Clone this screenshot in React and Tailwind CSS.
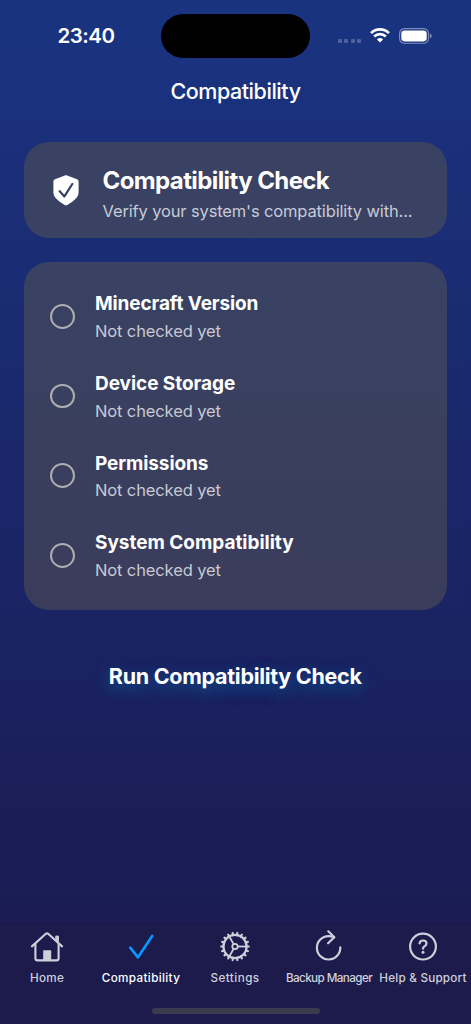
import React from 'react';
import { clsx } from 'clsx';

const checks = [
  { id: 'minecraft', title: 'Minecraft Version', status: 'Not checked yet', tracking: 'tracking-[-0.12px]' },
  { id: 'storage', title: 'Device Storage', status: 'Not checked yet', tracking: 'tracking-[-0.05px]' },
  { id: 'permissions', title: 'Permissions', status: 'Not checked yet', tracking: 'tracking-[-0.1px]' },
  { id: 'system', title: 'System Compatibility', status: 'Not checked yet', tracking: 'tracking-[-0.02px]' },
];

function SignalDots() {
  return (
    <div className="flex gap-[2.4px]">
      {[0, 1, 2, 3].map(i => (
        <span key={i} className="size-[4px] rounded-[1.3px] bg-[#52639c]" />
      ))}
    </div>
  );
}

function WifiIcon() {
  return (
    <svg width="20" height="15" viewBox="0 0 20 15" fill="none" stroke="white" strokeWidth="2.7">
      <path d="M1.1 5.1a12.7 12.7 0 0 1 17.8 0" />
      <path d="M4.2 8.5a8.3 8.3 0 0 1 11.6 0" />
      <path d="M10 14.6 6.9 11.5a4.5 4.5 0 0 1 6.2 0Z" fill="white" stroke="none" />
    </svg>
  );
}

function BatteryIcon() {
  return (
    <svg width="33" height="16" viewBox="0 0 33 16">
      <rect x="0.6" y="0.6" width="28.8" height="14.6" rx="4.8" fill="none" stroke="#8390ba" strokeWidth="1.1" />
      <rect x="2.3" y="2.4" width="25.4" height="11" rx="3.3" fill="white" />
      <path d="M30.9 5.4c1.2.5 1.8 1.4 1.8 2.5s-.6 2-1.8 2.5Z" fill="#8390ba" />
    </svg>
  );
}

function ShieldIcon() {
  return (
    <svg width="26" height="31" viewBox="0 0 26 31" fill="none">
      <path d="M13 .3c1 0 1.6.4 2.4.8l8 2.9c1.5.5 2.2 1.2 2.2 2.9v10.7c0 3.4-2.3 6.2-6 8.8-1.7 1.3-3.5 2.4-5 3.4-1.2.7-2 .7-3.2 0-1.5-1-3.3-2.1-5-3.4-3.7-2.6-6-5.4-6-8.8V6.9c0-1.7.7-2.4 2.2-2.9l8-2.9c.8-.4 1.4-.8 2.4-.8Z" fill="white" />
      <path d="m6.7 16.2 4.7 5.2L19.3 9" stroke="#39405f" strokeWidth="2.2" strokeLinecap="round" strokeLinejoin="round" />
    </svg>
  );
}

function HomeIcon() {
  return (
    <svg width="34" height="34" viewBox="0 0 34 34" fill="none" stroke="#cfcfdb" strokeWidth="2.1" strokeLinecap="round" strokeLinejoin="round">
      <path d="M1.9 16.4 15.6 4c.9-.8 1.9-.8 2.8 0l13.7 12.4" />
      <path d="M5.4 14v14.2c0 1.4.8 2.2 2.2 2.2h18.8c1.4 0 2.2-.8 2.2-2.2V14" />
      <path d="M26.1 6.1h2.3v6.7l-2.3-2.1Z" fill="#cfcfdb" strokeWidth="1" />
      <path d="M13.9 30V21h6.6V30Z" fill="#cfcfdb" strokeWidth="1.4" />
    </svg>
  );
}

function CheckIcon() {
  return (
    <svg width="34" height="34" viewBox="0 0 34 34" fill="none" stroke="#0a97ff" strokeWidth="2.7" strokeLinecap="round" strokeLinejoin="round">
      <path d="m6.2 17.7 7.8 9.6L28.2 6" />
    </svg>
  );
}

function GearIcon() {
  return (
    <svg width="34" height="34" viewBox="0 0 34 34" fill="none" stroke="#cfcfdb" strokeWidth="2">
      {Array.from({ length: 18 }, (_, i) => (
        <path key={i} d="M28.5 16.5h2.3" strokeWidth="2.1" strokeLinecap="round" transform={`rotate(${i * 20} 17 16.5)`} />
      ))}
      <circle cx="17" cy="16.5" r="11.6" strokeWidth="2.2" />
      <circle cx="17" cy="16.5" r="2.7" strokeWidth="1.8" />
      {[0, 120, 240].map(deg => (
        <path key={deg} d="M20 16.5h8.5" strokeWidth="1.8" transform={`rotate(${deg} 17 16.5)`} />
      ))}
    </svg>
  );
}

function RefreshIcon() {
  return (
    <svg width="34" height="34" viewBox="0 0 34 34" fill="none" stroke="#cfcfdb" strokeWidth="2.2" strokeLinecap="round" strokeLinejoin="round">
      <path d="M28.3 17.3A11.7 11.7 0 1 1 16.6 6.1q3 0 5.4.9" />
      <path d="m16.3 1.3 6 6-6.2 6" />
    </svg>
  );
}

function HelpIcon() {
  return (
    <svg width="34" height="34" viewBox="0 0 34 34" fill="none" stroke="#cfcfdb" strokeWidth="2.2" strokeLinecap="round">
      <circle cx="17" cy="16.6" r="12.9" />
      <path d="M13.6 13.4c.2-2 1.5-2.9 3.4-2.9 2.1 0 3.5 1.1 3.5 2.9 0 1.4-.8 2.1-1.8 2.8-1.2.8-1.7 1.2-1.7 2.5" />
      <circle cx="17" cy="22.3" r="1.5" fill="#cfcfdb" stroke="none" />
    </svg>
  );
}

const tabs = [
  { label: 'Home', icon: HomeIcon, tracking: 'tracking-[0.3px]' },
  { label: 'Compatibility', icon: CheckIcon, tracking: 'tracking-[0.35px]', active: true },
  { label: 'Settings', icon: GearIcon, tracking: 'tracking-[0.45px]' },
  { label: 'Backup Manager', icon: RefreshIcon, tracking: 'tracking-[-0.6px]' },
  { label: 'Help & Support', icon: HelpIcon, tracking: 'tracking-[0.22px]' },
];

function StatusBar() {
  return (
    <div className="relative h-[58px]">
      <span className="absolute left-[57.5px] top-[24px] text-[20.5px] leading-6 font-semibold tracking-[-0.5px]">23:40</span>
      <div className="absolute left-[161px] top-[14px] h-[44px] w-[149px] rounded-full bg-black" />
      <div className="absolute left-[338px] top-[38.5px]"><SignalDots /></div>
      <div className="absolute left-[370px] top-[28px]"><WifiIcon /></div>
      <div className="absolute left-[399px] top-[27.5px]"><BatteryIcon /></div>
    </div>
  );
}

export default function App() {
  return (
    <div className="flex h-[1024px] w-[471px] flex-col overflow-hidden bg-linear-to-b from-[#1a3380] via-[#1a2668] to-[#1a194e] font-[Inter,sans-serif] text-white">
      <header className="h-[119px] shrink-0 bg-[#1a3380]/60">
        <StatusBar />
        <h1 className="mt-[20px] text-center text-[21.5px] leading-[26px] font-medium tracking-[-0.45px]">Compatibility</h1>
      </header>

      <main className="flex flex-1 flex-col px-6 pt-[23px]">
        <section className="flex h-[96px] w-[422.5px] items-center rounded-[25px] bg-[#394263] pl-[29px]">
          <ShieldIcon />
          <div className="ml-[23.5px] pt-[10px] whitespace-nowrap">
            <h2 className="text-[24px] leading-[32px] font-bold tracking-[-0.6px]">Compatibility Check</h2>
            <p className="text-[16.5px] leading-[29px] tracking-[-0.14px] text-[#c8cad5]">Verify your system's compatibility with...</p>
          </div>
        </section>

        <section className="mt-6 h-[348.3px] w-[422.5px] rounded-[25px] bg-linear-to-b from-[#394263] to-[#3a3c5b] pt-[15px]">
          {checks.map(item => (
            <div key={item.id} className="flex h-[79.67px] items-center pl-[26.4px]">
              <span className="mb-[1px] size-[24.6px] rounded-full border-2 border-[#aeadaf]" />
              <div className="ml-[20px] pt-[2.5px]">
                <h3 className={clsx('text-[19px] leading-[27.6px] font-[650]', item.tracking)}>{item.title}</h3>
                <p className="text-[16.5px] leading-[27.6px] tracking-[-0.12px] text-[#c8c9d3]">{item.status}</p>
              </div>
            </div>
          ))}
        </section>

        <button className="mt-[50px] h-[32px] w-[422.5px] text-[21.5px] font-[650] tracking-[-0.28px] [text-shadow:0_5px_16px_#0a70b0d0]">
          Run Compatibility Check
        </button>
      </main>

      <nav className="relative h-[101px] shrink-0 border-t border-[#1a1747] bg-[#1c1b4b]">
        <div className="mr-px grid grid-cols-5 pt-[6px]">
          {tabs.map(({ label, icon: Icon, tracking, active }) => (
            <div key={label} className="flex flex-col items-center">
              <Icon />
              <span className={clsx('mt-[6px] whitespace-nowrap text-[11.7px] leading-4 font-medium', tracking, active ? 'text-white' : 'text-[#cfcfdb]')}>{label}</span>
            </div>
          ))}
        </div>
        <div className="absolute bottom-[10px] left-[152px] h-[6px] w-[168px] rounded-full bg-[#3c3b4d]" />
      </nav>
    </div>
  );
}
